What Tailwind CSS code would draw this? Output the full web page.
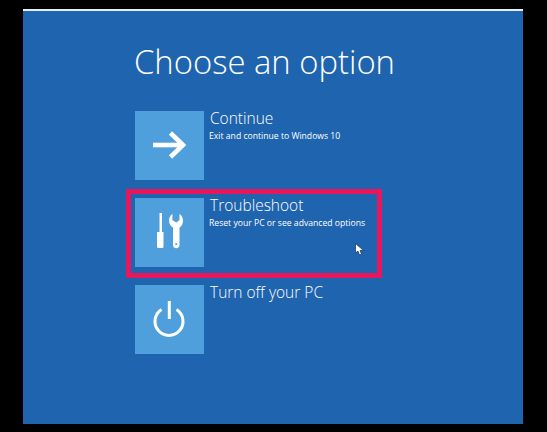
<!DOCTYPE html>
<html><head><meta charset="utf-8"><script src="https://cdn.jsdelivr.net/npm/@tailwindcss/browser@4"></script></head>
<body class="bg-black">
<div class="w-[547px] h-[432px] bg-black pt-[9px] pl-[23px] overflow-hidden font-['Open_Sans',sans-serif] text-white">
  <div class="relative w-[500px] h-[415px] bg-[#1f64ae] border-t-2 border-[#e8eef5] pl-[112px]">
    <h1 class="text-[32.8px] leading-[46px] font-light pt-[28px] h-[100px] -ml-[1px]">Choose an option</h1>
    <div class="flex flex-col gap-[18px]">
      <div class="flex gap-[5px] h-[69px]">
        <div class="w-[69px] h-[69px] bg-[#4f9fdc]">
          <svg width="69" height="69" viewBox="0 0 69 69" fill="none" stroke="#fff" stroke-width="4.6"><path d="M18 34H47"/><path d="M35.500 22L48 34L35.500 46"/></svg>
        </div>
        <div class="-mt-[3px]">
          <div class="text-[15.500px] leading-[20px] font-light pl-[1px]">Continue</div>
          <div class="text-[8.650px] leading-[14px] mt-[1px]">Exit and continue to Windows 10</div>
        </div>
      </div>
      <div class="flex gap-[5px] h-[69px]">
        <div class="w-[69px] h-[69px] bg-[#4f9fdc]">
          <svg width="69" height="69" viewBox="0 0 69 69" fill="#fff"><path d="M24.500 15h2.500v19h-2.500z"/><path d="M22 34h6.500v14.500a1.500 1.500 0 0 1-1.500 1.500h-3.500a1.500 1.500 0 0 1-1.500-1.500z"/><path d="M37.500 16C35 17.500 34 20 34 22.500c0 3.500 2 6 4 7V47c0 2 1.300 3.200 3.200 3.200s3.300-1.200 3.300-3.200V29.500c2-1 3.500-3.500 3.500-7 0-2.500-1-5-3.500-6.500v6l-3.200 2.500-4-2.500z"/><circle cx="41.200" cy="46" r="1.100" fill="#4f9fdc"/></svg>
        </div>
        <div class="-mt-[3px]">
          <div class="text-[15.500px] leading-[20px] font-light pl-[1px]">Troubleshoot</div>
          <div class="text-[8.650px] leading-[14px] mt-[1px]">Reset your PC or see advanced options</div>
        </div>
      </div>
      <div class="flex gap-[5px] h-[69px]">
        <div class="w-[69px] h-[69px] bg-[#4f9fdc]">
          <svg width="69" height="69" viewBox="0 0 69 69" fill="none" stroke="#fff" stroke-width="3"><path d="M34.300 16V34"/><path d="M26.500 24.600A14 14 0 1 0 41.500 24.600"/></svg>
        </div>
        <div class="-mt-[3px]">
          <div class="text-[15.500px] leading-[20px] font-light pl-[1px]">Turn off your PC</div>
        </div>
      </div>
    </div>
    <div class="absolute left-[103px] top-[178px] w-[256px] h-[89px] border-[5px] border-[#e8175d]"></div>
    <svg class="absolute left-[332px] top-[232px]" width="9" height="13" viewBox="0 0 9 13"><path d="M0.500 0.500V10L3 8L4.500 12L6.500 11L5 7.500H8.500Z" fill="#fff" stroke="#12325c" stroke-width="0.700"/></svg>
  </div>
</div>
</body></html>
